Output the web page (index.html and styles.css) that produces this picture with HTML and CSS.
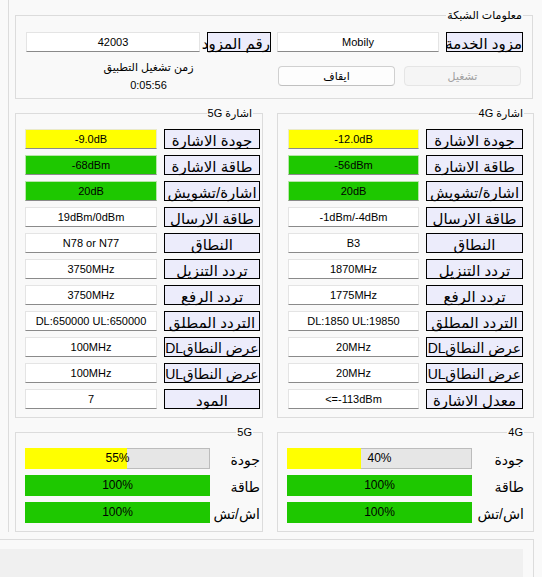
FILE: index.html
```html
<!DOCTYPE html>
<html lang="ar">
<head>
<meta charset="utf-8">
<title>Network</title>
<link rel="stylesheet" href="styles.css">
</head>
<body>
<div class="panel">
  <div class="group net">
    <span class="group-title" dir="rtl">معلومات الشبكة</span>
    <div class="net-row">
      <div class="tb w174">42003</div>
      <div class="lbl w64" dir="rtl">رقم المزود</div>
      <div class="tb w162">Mobily</div>
      <div class="lbl w77" dir="rtl">مزود الخدمة</div>
    </div>
    <div class="net-row2">
      <div class="runtime">
        <div dir="rtl">زمن تشغيل التطبيق</div>
        <div>0:05:56</div>
      </div>
      <div class="btn">ايقاف</div>
      <div class="btn disabled">تشغيل</div>
    </div>
  </div>

  <div class="pair">
    <div class="group sig sig5">
      <span class="group-title" dir="rtl">اشارة 5G</span>
      <div class="rows">
        <div class="row"><div class="tb yellow">-9.0dB</div><div class="lbl" dir="rtl">جودة الاشارة</div></div>
        <div class="row"><div class="tb green">-68dBm</div><div class="lbl" dir="rtl">طاقة الاشارة</div></div>
        <div class="row"><div class="tb green">20dB</div><div class="lbl" dir="rtl">اشارة/تشويش</div></div>
        <div class="row"><div class="tb">19dBm/0dBm</div><div class="lbl" dir="rtl">طاقة الارسال</div></div>
        <div class="row"><div class="tb">N78 or N77</div><div class="lbl" dir="rtl">النطاق</div></div>
        <div class="row"><div class="tb">3750MHz</div><div class="lbl" dir="rtl">تردد التنزيل</div></div>
        <div class="row"><div class="tb">3750MHz</div><div class="lbl" dir="rtl">تردد الرفع</div></div>
        <div class="row"><div class="tb">DL:650000 UL:650000</div><div class="lbl" dir="rtl">التردد المطلق</div></div>
        <div class="row"><div class="tb">100MHz</div><div class="lbl tight" dir="rtl">عرض النطاقDL</div></div>
        <div class="row"><div class="tb">100MHz</div><div class="lbl tight" dir="rtl">عرض النطاقUL</div></div>
        <div class="row"><div class="tb">7</div><div class="lbl" dir="rtl">المود</div></div>
      </div>
    </div>
    <div class="group sig sig4">
      <span class="group-title" dir="rtl">اشارة 4G</span>
      <div class="rows">
        <div class="row"><div class="tb yellow">-12.0dB</div><div class="lbl" dir="rtl">جودة الاشارة</div></div>
        <div class="row"><div class="tb green">-56dBm</div><div class="lbl" dir="rtl">طاقة الاشارة</div></div>
        <div class="row"><div class="tb green">20dB</div><div class="lbl" dir="rtl">اشارة/تشويش</div></div>
        <div class="row"><div class="tb">-1dBm/-4dBm</div><div class="lbl" dir="rtl">طاقة الارسال</div></div>
        <div class="row"><div class="tb">B3</div><div class="lbl" dir="rtl">النطاق</div></div>
        <div class="row"><div class="tb">1870MHz</div><div class="lbl" dir="rtl">تردد التنزيل</div></div>
        <div class="row"><div class="tb">1775MHz</div><div class="lbl" dir="rtl">تردد الرفع</div></div>
        <div class="row"><div class="tb">DL:1850 UL:19850</div><div class="lbl" dir="rtl">التردد المطلق</div></div>
        <div class="row"><div class="tb">20MHz</div><div class="lbl tight" dir="rtl">عرض النطاقDL</div></div>
        <div class="row"><div class="tb">20MHz</div><div class="lbl tight" dir="rtl">عرض النطاقUL</div></div>
        <div class="row"><div class="tb">&lt;=-113dBm</div><div class="lbl" dir="rtl">معدل الاشارة</div></div>
      </div>
    </div>
  </div>

  <div class="pair">
    <div class="group bars bars5">
      <span class="group-title">5G</span>
      <div class="rows bar-rows">
        <div class="bar-line"><div class="bar"><div class="fill yellow-fill" style="width:55%"></div><span class="bar-text">55%</span></div><span class="bar-label" dir="rtl">جودة</span></div>
        <div class="bar-line"><div class="bar"><div class="fill green-fill" style="width:100%"></div><span class="bar-text">100%</span></div><span class="bar-label" dir="rtl">طاقة</span></div>
        <div class="bar-line"><div class="bar"><div class="fill green-fill" style="width:100%"></div><span class="bar-text">100%</span></div><span class="bar-label" dir="rtl">اش/تش</span></div>
      </div>
    </div>
    <div class="group bars bars4">
      <span class="group-title">4G</span>
      <div class="rows bar-rows">
        <div class="bar-line"><div class="bar"><div class="fill yellow-fill" style="width:40%"></div><span class="bar-text">40%</span></div><span class="bar-label" dir="rtl">جودة</span></div>
        <div class="bar-line"><div class="bar"><div class="fill green-fill" style="width:100%"></div><span class="bar-text">100%</span></div><span class="bar-label" dir="rtl">طاقة</span></div>
        <div class="bar-line"><div class="bar"><div class="fill green-fill" style="width:100%"></div><span class="bar-text">100%</span></div><span class="bar-label" dir="rtl">اش/تش</span></div>
      </div>
    </div>
  </div>
</div>
<div class="bottom"><div class="bottom-fill"></div></div>
</body>
</html>
```

FILE: styles.css
```css
* { box-sizing: border-box; }
html, body { margin: 0; padding: 0; }
body {
  width: 542px;
  height: 577px;
  overflow: hidden;
  background: #f9f9f9;
  font-family: "Liberation Sans", "DejaVu Sans", sans-serif;
  font-size: 11px;
  color: #000;
}

.panel {
  margin-left: 8px;
  border-left: 1px solid #dcdcdc;
  padding: 15px 0 0 6px;
  height: 532px;
}

.group {
  position: relative;
  border: 1px solid #dcdcdc;
}
.group-title {
  position: absolute;
  top: -8px;
  right: 9px;
  background: #f9f9f9;
  padding: 0 1px;
  font-size: 11px;
  line-height: 14px;
  white-space: nowrap;
}

/* network info */
.net {
  width: 518px;
  height: 84px;
  padding: 16px 0 0 10px;
}
.net-row { display: flex; height: 20px; }
.net-row .w174 { width: 174px; }
.net-row .w64 { width: 64px; margin-left: 7px; }
.net-row .w162 { width: 162px; margin-left: 6px; }
.net-row .w77 { width: 77px; margin-left: 7px; }

.net-row2 { display: flex; margin-top: 6px; }
.runtime {
  width: 245px;
  text-align: center;
  line-height: 18px;
}
.btn {
  width: 117px;
  height: 20px;
  margin-top: 8px;
  margin-left: 7px;
  border: 1px solid #d0d0d0;
  border-bottom-color: #c0c0c0;
  border-radius: 4px;
  background: #fdfdfd;
  text-align: center;
  line-height: 18px;
}
.btn.disabled {
  margin-left: 9px;
  background: #f5f5f5;
  border-color: #e5e5e5;
  color: #a0a0a0;
}

/* text boxes and labels */
.tb {
  height: 20px;
  background: #fff;
  border: 1px solid #e4e4e4;
  border-bottom: 1px solid #8a8a8a;
  text-align: center;
  line-height: 18px;
  white-space: nowrap;
  overflow: hidden;
}
.tb.yellow { background: #ffff00; border-color: #eaeac8; border-bottom-color: #8a8a8a; }
.tb.green { background: #1ec800; border-color: #b6e6a8; border-bottom-color: #8a8a8a; }

.lbl {
  height: 20px;
  background: #ececfb;
  border: 1px solid #000;
  font-size: 15px;
  line-height: 21px;
  text-align: center;
  white-space: nowrap;
}
.lbl.tight { font-size: 14px; letter-spacing: -0.2px; }

/* signal groups */
.pair { display: flex; gap: 14px; margin-top: 14px; }
.sig { height: 305px; padding-top: 15px; }
.sig5 { width: 248px; padding-left: 9px; }
.sig4 { width: 257px; padding-left: 10px; }
.rows { display: flex; flex-direction: column; gap: 6px; }
.row { display: flex; gap: 7px; height: 20px; }
.sig5 .tb { width: 132px; }
.sig5 .lbl { width: 96px; }
.sig4 .tb { width: 131px; }
.sig4 .lbl { width: 97px; }

/* bar groups */
.bars { height: 100px; padding: 15px 0 0 9px; }
.bars5 { width: 248px; }
.bars4 { width: 257px; }
.bar-line { display: flex; align-items: center; height: 21px; }
.bar {
  position: relative;
  width: 185px;
  height: 21px;
  background: #e6e6e6;
  box-shadow: inset 0 0 0 1px #bcbcbc;
}
.fill { height: 100%; }
.yellow-fill { background: #ffff00; }
.green-fill { background: #1ec800; }
.bar-text {
  position: absolute;
  left: 0;
  right: 0;
  top: 0;
  text-align: center;
  line-height: 21px;
  font-size: 12px;
}
.bar-label {
  flex: 1;
  text-align: right;
  font-size: 14px;
  line-height: 21px;
  padding-top: 3px;
}
.bars5 .bar-label { padding-right: 2px; }
.bars4 .bar-label { padding-right: 9px; }

/* bottom strip */
.bottom {
  margin-top: 7px;
  width: 534px;
  height: 38px;
  border-top: 1px solid #dcdcdc;
  border-right: 1px solid #dcdcdc;
  padding-top: 9px;
}
.bottom-fill {
  width: 523px;
  height: 100%;
  background: #f0f0f0;
}
```
